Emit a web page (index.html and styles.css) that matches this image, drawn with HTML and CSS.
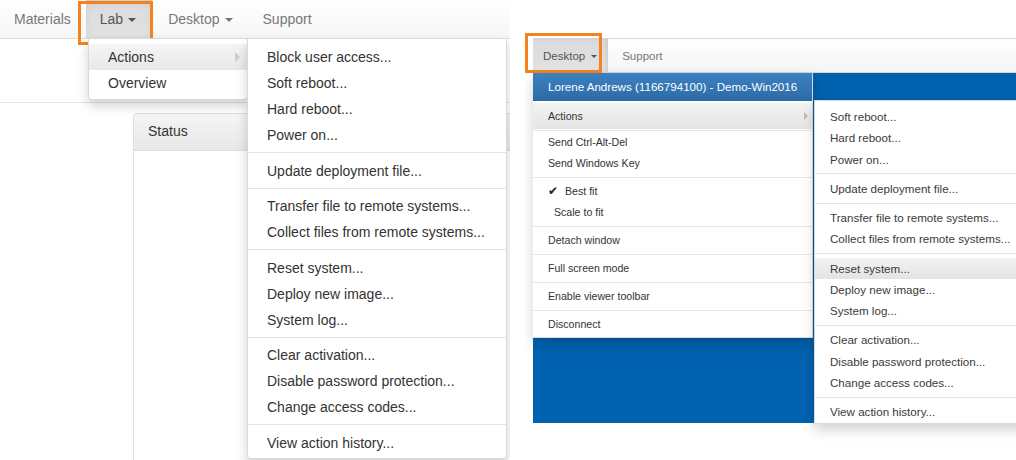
FILE: index.html
```html
<!DOCTYPE html>
<html>
<head>
<meta charset="utf-8">
<link rel="stylesheet" href="styles.css">
</head>
<body>
<div class="shot shot-left">
  <nav class="navbar">
    <ul class="nav">
      <li class="first">Materials</li>
      <li class="active">Lab<span class="caret"></span></li>
      <li class="after-active">Desktop<span class="caret"></span></li>
      <li>Support</li>
    </ul>
  </nav>
  <div class="subbar"></div>
  <div class="content">
    <div class="panel">
      <div class="panel-heading">Status</div>
    </div>
  </div>
  <div class="hl-box hb-left"></div>
  <ul class="dropdown dd-lab">
    <li class="hover">Actions<span class="sub-caret"></span></li>
    <li>Overview</li>
  </ul>
  <ul class="dropdown dd-actions">
    <li>Block user access...</li>
    <li>Soft reboot...</li>
    <li>Hard reboot...</li>
    <li>Power on...</li>
    <li class="divider"></li>
    <li>Update deployment file...</li>
    <li class="divider"></li>
    <li>Transfer file to remote systems...</li>
    <li>Collect files from remote systems...</li>
    <li class="divider"></li>
    <li>Reset system...</li>
    <li>Deploy new image...</li>
    <li>System log...</li>
    <li class="divider"></li>
    <li>Clear activation...</li>
    <li>Disable password protection...</li>
    <li>Change access codes...</li>
    <li class="divider"></li>
    <li>View action history...</li>
  </ul>
</div>
<div class="shot shot-right">
  <div class="top-space"></div>
  <nav class="navbar2">
    <ul class="nav2">
      <li class="active">Desktop<span class="caret small"></span></li>
      <li>Support</li>
    </ul>
  </nav>
  <div class="screen"></div>
  <div class="hl-box hb-right"></div>
  <ul class="dropdown dd-desk">
    <li class="head">Lorene Andrews (1166794100) - Demo-Win2016</li>
    <li class="hover">Actions<span class="sub-caret small"></span></li>
    <li class="divider thin"></li>
    <li>Send Ctrl-Alt-Del</li>
    <li>Send Windows Key</li>
    <li class="divider"></li>
    <li><span class="tick">✔</span>Best fit</li>
    <li class="indent">Scale to fit</li>
    <li class="divider"></li>
    <li>Detach window</li>
    <li class="divider"></li>
    <li>Full screen mode</li>
    <li class="divider"></li>
    <li>Enable viewer toolbar</li>
    <li class="divider"></li>
    <li>Disconnect</li>
  </ul>
  <ul class="dropdown dd-sub">
    <li>Soft reboot...</li>
    <li>Hard reboot...</li>
    <li>Power on...</li>
    <li class="divider"></li>
    <li>Update deployment file...</li>
    <li class="divider"></li>
    <li>Transfer file to remote systems...</li>
    <li>Collect files from remote systems...</li>
    <li class="divider"></li>
    <li class="hover">Reset system...</li>
    <li>Deploy new image...</li>
    <li>System log...</li>
    <li class="divider"></li>
    <li>Clear activation...</li>
    <li>Disable password protection...</li>
    <li>Change access codes...</li>
    <li class="divider"></li>
    <li>View action history...</li>
  </ul>
</div>
</body>
</html>
```

FILE: styles.css
```css
* { box-sizing: border-box; }
html, body { margin: 0; padding: 0; }
body {
  width: 1016px;
  height: 460px;
  overflow: hidden;
  display: flex;
  background: #fff;
  font-family: "Liberation Sans", Arial, sans-serif;
}
ul { list-style: none; margin: 0; padding: 0; }

/* ---------- left screenshot ---------- */
.shot-left {
  position: relative;
  flex: none;
  width: 510px;
  height: 460px;
  overflow: hidden;
}
.navbar {
  height: 39px;
  border-bottom: 1px solid #dcdcdc;
  background: linear-gradient(#ffffff, #f6f6f6);
}
.nav { display: flex; height: 38px; }
.nav li {
  display: flex;
  align-items: center;
  padding: 0 15px;
  font-size: 14px;
  color: #777;
}
.nav li.first { padding-left: 14px; }
.nav li.active {
  background: linear-gradient(#dbdbdb, #e2e2e2);
  box-shadow: inset 0 3px 9px rgba(0,0,0,.075);
  color: #555;
  padding: 0 16px 0 14px;
}
.nav li.after-active { padding-left: 16px; }
.caret {
  display: inline-block;
  width: 0;
  height: 0;
  margin-left: 5px;
  margin-top: 2px;
  border-top: 4px solid;
  border-left: 4px solid transparent;
  border-right: 4px solid transparent;
}
.caret.small {
  margin-left: 6px;
  border-top-width: 3px;
  border-left-width: 3px;
  border-right-width: 3px;
}
.subbar {
  height: 64px;
  border-bottom: 1px solid #e6e6e6;
}
.content { padding: 10px 0 0 133px; }
.panel {
  height: 400px;
  border: 1px solid #dddddd;
  border-right: 0;
  border-radius: 4px 0 0 0;
}
.panel-heading {
  height: 37px;
  padding: 0 14px;
  line-height: 35px;
  font-size: 14px;
  color: #333;
  background: linear-gradient(#f5f5f5, #e8e8e8);
  border-bottom: 1px solid #dddddd;
  border-radius: 3px 0 0 0;
}

.hl-box {
  position: absolute;
  border: 3px solid #f5821f;
}
.hb-left { left: 78px; top: 1px; width: 75px; height: 44px; }

.dropdown {
  position: absolute;
  background: #fff;
  border: 1px solid rgba(0,0,0,.15);
  border-radius: 0 0 4px 4px;
  box-shadow: 0 6px 12px rgba(0,0,0,.175);
}
.dropdown li { position: relative; white-space: nowrap; }
.dropdown .divider { padding: 0; background: #e5e5e5; height: 1px; }

.dd-lab { left: 88px; top: 38px; width: 160px; padding: 5px 0 3px; }
.dd-lab li {
  height: 26px;
  line-height: 26px;
  padding-left: 19px;
  font-size: 14px;
  color: #333;
}
.dd-lab li.hover { background: linear-gradient(#f5f5f5, #e8e8e8); }
.sub-caret {
  position: absolute;
  right: 7px;
  top: 8px;
  width: 0;
  height: 0;
  border-left: 5px solid #cccccc;
  border-top: 5px solid transparent;
  border-bottom: 5px solid transparent;
}
.sub-caret.small {
  right: 4px;
  top: 9px;
  border-left-width: 4px;
  border-top-width: 4px;
  border-bottom-width: 4px;
  border-left-color: #bbbbbb;
}

.dd-actions { left: 247px; top: 38px; width: 260px; padding: 5px 0 2px; }
.dd-actions li {
  height: 26px;
  line-height: 26px;
  padding-left: 19px;
  font-size: 14px;
  color: #333;
}
.dd-actions .divider { height: 1px; margin: 4px 0 4.5px; }

/* ---------- right screenshot ---------- */
.shot-right {
  position: relative;
  flex: 1;
  margin-left: 15px;
  height: 460px;
  overflow: hidden;
}
.top-space { height: 38px; }
.navbar2 {
  margin-left: 8px;
  height: 35px;
  border-top: 1px solid #d6d6d6;
  border-bottom: 1px solid #d6d6d6;
  background: linear-gradient(#ffffff, #f4f4f4);
}
.nav2 { display: flex; height: 33px; }
.nav2 li {
  display: flex;
  align-items: center;
  padding: 0 14px;
  font-size: 11.5px;
  color: #777;
}
.nav2 li.active {
  padding: 0 11px 0 10px;
  color: #555;
  background: linear-gradient(#dadada, #e3e3e3);
  box-shadow: inset -3px 0 3px rgba(0,0,0,.06);
}
.screen {
  margin-left: 8px;
  height: 350px;
  background: #0062b0;
}
.hb-right { left: 0; top: 33px; width: 77px; height: 40px; }

.dd-desk {
  left: 8px;
  top: 73px;
  width: 280px;
  padding: 0 0 2px;
  border: 0;
  border-right: 1px solid rgba(0,0,0,.15);
  border-bottom: 1px solid rgba(0,0,0,.15);
  border-radius: 0;
}
.dd-desk li {
  height: 21px;
  line-height: 21px;
  padding-left: 15px;
  font-size: 10.6px;
  color: #333;
}
.dd-desk li.head {
  height: 28px;
  line-height: 28px;
  margin-bottom: 2px;
  font-size: 11.6px;
  color: #fff;
  background: linear-gradient(#3d81c2, #2c6aa5);
}
.dd-desk li.hover {
  height: 26px;
  line-height: 26px;
  background: linear-gradient(#f3f3f3, #e5e5e5);
}
.dd-desk .divider { height: 1px; margin: 3px 0; background: #e6e6e6; }
.dd-desk .divider.thin { margin: 1px 0; }
.dd-desk li.indent { padding-left: 21px; }
.tick {
  display: inline-block;
  width: 17px;
  font-family: "DejaVu Sans", sans-serif;
  font-size: 12px;
  color: #222;
}

.dd-sub {
  left: 289px;
  top: 100px;
  width: 220px;
  padding: 5px 0 1px;
  border-right: 0;
  border-radius: 0;
}
.dd-sub li {
  height: 21.25px;
  line-height: 21.25px;
  padding-left: 15px;
  font-size: 11.6px;
  color: #3a3a3a;
}
.dd-sub li.hover { background: linear-gradient(#f3f3f3, #e3e3e3); }
.dd-sub .divider { height: 1px; margin: 3.5px 0; }
```
